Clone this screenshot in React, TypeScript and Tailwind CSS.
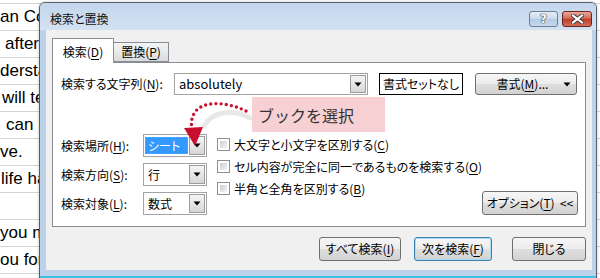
import React from "react";

const ui = "font-['Noto_Sans_CJK_JP','Noto_Sans',sans-serif] [font-feature-settings:'palt']";

const sheetRows: [string, string][] = [
  ["an Co", "ml-0"],
  ["after", "ml-[5px]"],
  ["derstan", "ml-0"],
  ["will te", "ml-[2px]"],
  ["can b", "ml-[6px]"],
  ["ve.", "ml-0"],
  ["life ha", "ml-[1px]"],
  ["", "ml-0"],
  ["you m", "ml-0"],
  ["ou for", "ml-0"],
];

const btnGray =
  "border-[#707070] bg-[linear-gradient(#f6f6f6,#ececec_48%,#dedede_52%,#d2d2d2)]";

const Arrow = () => (
  <svg width="8" height="5" viewBox="0 0 8 5">
    <path d="M0.5 0.5 H7.5 L4 4.5 Z" fill="#000" />
  </svg>
);

const DropBtn = () => (
  <div className="flex w-[16px] items-center justify-center border border-[#9c9c9c] bg-[linear-gradient(#f4f4f4,#e6e6e6_50%,#d6d6d6)]">
    <Arrow />
  </div>
);

const Combo = ({ value, selected }: { value: string; selected?: boolean }) => (
  <div className="flex h-[23px] w-[64px] border border-[#a3a3a3] bg-white p-[1px]">
    <div className="flex flex-1 items-center pr-[1px]">
      {selected ? (
        <span className="flex h-[17px] w-full items-center border border-dotted border-[#e2903d] bg-[#3399ff] pl-[2px] text-white">
          {value}
        </span>
      ) : (
        <span className="pl-[3px]">{value}</span>
      )}
    </div>
    <DropBtn />
  </div>
);

const Check = ({ children }: { children: React.ReactNode }) => (
  <div className="flex h-[13px] items-center whitespace-nowrap">
    <div className="h-[13px] w-[13px] shrink-0 border border-[#8e8f8f] bg-white p-[2px]">
      <div className="h-full w-full bg-[linear-gradient(135deg,#cbcfd5,#f4f4f4)]" />
    </div>
    <span className="ml-[4px] leading-none">{children}</span>
  </div>
);

const Field = ({ label, value, selected }: { label: React.ReactNode; value: string; selected?: boolean }) => (
  <div className="flex h-[23px] items-center">
    <span className="w-[82px] whitespace-nowrap">{label}</span>
    <Combo value={value} selected={selected} />
  </div>
);

export default function App() {
  return (
    <div className={`relative h-[278px] w-[600px] overflow-hidden bg-white ${ui} text-[12px] text-black`}>
      {/* worksheet behind the dialog */}
      <div className="pt-[3px] font-['Liberation_Sans',Arial,sans-serif] text-[17px] [font-feature-settings:normal]">
        {sheetRows.map(([t, m], i) => (
          <div key={i} className="flex h-[27px] items-center border-t border-[#d4d4d4] whitespace-nowrap">
            <span className={m}>{t}</span>
          </div>
        ))}
        <div className="border-t border-[#d4d4d4]" />
      </div>

      {/* dialog window */}
      <div className="absolute left-[39px] top-[2px] flex h-[280px] w-[558px] flex-col rounded-t-[6px] border border-[#56606c] bg-[#bcd2ea] shadow-[0_0_3px_rgba(0,0,0,0.25)]">
        <div className="flex h-[27px] items-start rounded-t-[5px] bg-[linear-gradient(#c2d6ec,#d3e2f2)] pl-[10px] pr-[4px]">
          <span className="mt-[7px] text-[12px] text-[#111]">検索と置換</span>
          <div className="ml-auto mt-[8px] flex gap-[4px]">
            <div className="flex h-[16px] w-[29px] items-center justify-center rounded-[3px] border border-[#6f7f93] bg-[linear-gradient(#e6eef7,#c9d9ec_50%,#b5cbe5_52%,#c7d8ec)]">
              <span className="font-['DejaVu_Sans',sans-serif] text-[12px] font-bold leading-none text-white [text-shadow:0_0_1px_#333,0_0_1px_#333,0_0_1px_#333]">
                ?
              </span>
            </div>
            <div className="flex h-[16px] w-[30px] items-center justify-center rounded-[3px] border border-[#6b231c] bg-[linear-gradient(#e9a99d,#d46a58_45%,#c23c28_52%,#d0705a)]">
              <svg width="13" height="10" viewBox="0 0 13 10">
                <path d="M2 1.5 L11 8.5 M11 1.5 L2 8.5" stroke="#3c3c3c" strokeWidth="4" strokeLinecap="square" />
                <path d="M2 1.5 L11 8.5 M11 1.5 L2 8.5" stroke="#fff" strokeWidth="2.2" strokeLinecap="square" />
              </svg>
            </div>
          </div>
        </div>

        {/* client area */}
        <div className="ml-[6px] h-[240px] w-[546px] bg-[#f0f0f0] px-[6px]">
          <div className="relative z-10 mb-[-1px] mt-[8px] flex h-[25px] items-end">
            <div className="flex h-[25px] w-[62px] items-start justify-center border-x border-t border-[#898c95] bg-white pt-[4px]">
              検索(<u className="underline-offset-2">D</u>)
            </div>
            <div className="mb-[1px] flex h-[20px] w-[55px] items-center justify-center border-y border-r border-[#898c95] bg-[linear-gradient(#f3f3f3,#e9e9e9_50%,#dadada)] pb-[1px]">
              置換(<u className="underline-offset-2">P</u>)
            </div>
          </div>

          <div className="flex h-[165px] w-[534px] flex-col border border-[#898c95] bg-white pl-[8px] pr-[7px] pt-[10px]">
            <div className="flex h-[22px] items-center whitespace-nowrap">
              <span className="w-[113px]">
                検索する文字列(<u className="underline-offset-2">N</u>):
              </span>
              <div className="flex h-[22px] w-[194px] border border-[#a3a3a3] p-[1px]">
                <span className="flex flex-1 items-center pl-[3px] text-[13px]">absolutely</span>
                <DropBtn />
              </div>
              <div className="ml-[11px] flex h-[22px] w-[84px] items-center justify-center border border-black bg-white">
                書式セットなし
              </div>
              <div className={`ml-[12px] flex h-[22px] w-[102px] items-center rounded-[3px] border ${btnGray}`}>
                <span className="flex-1 pl-[6px] text-center">
                  書式(<u className="underline-offset-2">M</u>)...
                </span>
                <span className="mr-[5px] flex">
                  <Arrow />
                </span>
              </div>
            </div>

            <div className="mt-[39px] flex">
              <div className="flex flex-col gap-[6px]">
                <Field label={<>検索場所(<u className="underline-offset-2">H</u>):</>} value="シート" selected />
                <Field label={<>検索方向(<u className="underline-offset-2">S</u>):</>} value="行" />
                <Field label={<>検索対象(<u className="underline-offset-2">L</u>):</>} value="数式" />
              </div>
              <div className="ml-[10px] flex flex-1 flex-col gap-[9px] pt-[4px]">
                <Check>
                  大文字と小文字を区別する(<u className="underline-offset-2">C</u>)
                </Check>
                <Check>
                  セル内容が完全に同一であるものを検索する(<u className="underline-offset-2">O</u>)
                </Check>
                <Check>
                  半角と全角を区別する(<u className="underline-offset-2">B</u>)
                </Check>
              </div>
              <div className={`mt-[57px] flex h-[24px] w-[102px] items-center justify-center whitespace-nowrap rounded-[3px] border ${btnGray}`}>
                オプション(<u className="underline-offset-2">T</u>)&nbsp;&nbsp;&lt;&lt;
              </div>
            </div>
          </div>

          <div className="mt-[10px] flex whitespace-nowrap pl-[267px]">
            <div className={`flex h-[24px] w-[82px] items-center justify-center rounded-[3px] border ${btnGray}`}>
              すべて検索(<u className="underline-offset-2">I</u>)
            </div>
            <div className="ml-[13px] flex h-[24px] w-[78px] items-center justify-center rounded-[3px] border border-[#3c7fb1] bg-[linear-gradient(#f6f6f6,#ececec_48%,#dedede_52%,#d2d2d2)] shadow-[inset_0_0_0_1px_#a9dcf2]">
              次を検索(<u className="underline-offset-2">F</u>)
            </div>
            <div className={`ml-[20px] flex h-[24px] w-[74px] items-center justify-center rounded-[3px] border ${btnGray}`}>
              閉じる
            </div>
          </div>
        </div>
        <div className="mt-[6px] h-[2px] bg-[#3dc0e4]" />
      </div>

      {/* callout */}
      <div className="absolute left-[252px] top-[97px] flex h-[35px] w-[133px] items-center bg-[#f7d0d4] pl-[6px] text-[16px] text-[#333] [font-feature-settings:normal]">
        ブックを選択
      </div>
      <svg className="pointer-events-none absolute left-0 top-0" width="600" height="278">
        <path d="M250 118 C 232 108, 212 112, 204 126" stroke="#e8e8e8" strokeWidth="5" fill="none" strokeLinecap="round" />
        <path
          d="M246 111 C 228 102, 204 100, 195 112 C 191 118, 191 124, 192 129"
          stroke="#c8102e"
          strokeWidth="3.4"
          fill="none"
          strokeLinecap="round"
          strokeDasharray="0 5.2"
        />
        <polygon points="184,128 203,127 195,146" fill="#c8102e" />
      </svg>
    </div>
  );
}
